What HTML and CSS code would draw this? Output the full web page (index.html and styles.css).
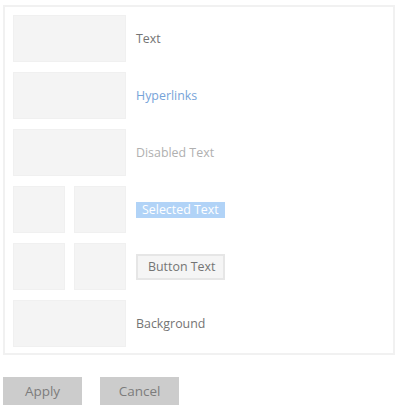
FILE: index.html
```html
<!DOCTYPE html>
<html lang="en">
<head>
    <meta charset="UTF-8">
    <title>Colors</title>
    <link rel="stylesheet" href="styles.css">
</head>
<body>
    <div class="panel">
        <div class="row">
            <div class="swatch"></div>
            <span class="label">Text</span>
        </div>
        <div class="row">
            <div class="swatch"></div>
            <span class="label link">Hyperlinks</span>
        </div>
        <div class="row">
            <div class="swatch"></div>
            <span class="label disabled">Disabled Text</span>
        </div>
        <div class="row">
            <div class="swatch split">
                <div class="half"></div>
                <div class="half"></div>
            </div>
            <span class="label selected">Selected Text</span>
        </div>
        <div class="row">
            <div class="swatch split">
                <div class="half"></div>
                <div class="half"></div>
            </div>
            <span class="label button-text">Button Text</span>
        </div>
        <div class="row">
            <div class="swatch"></div>
            <span class="label">Background</span>
        </div>
    </div>

    <div class="actions">
        <button class="btn">Apply</button>
        <button class="btn">Cancel</button>
    </div>
</body>
</html>
```

FILE: styles.css
```css
body {
    margin: 0;
    padding: 5px 0 0 3px;
    background: #fff;
    font-family: 'Open Sans', 'Noto Sans', sans-serif;
    font-size: 12.4px;
    color: #747474;
}
.panel {
    box-sizing: border-box;
    width: 392px;
    height: 350px;
    border: 2px solid #f1f1f1;
    padding: 8px 0 0 8px;
    display: flex;
    flex-direction: column;
    gap: 10px;
}
.row {
    display: flex;
    align-items: center;
    gap: 10px;
    height: 47px;
}
.swatch {
    width: 113px;
    height: 47px;
    background: #f4f4f4;
    box-shadow: inset 0 0 0 1px #f0f0f0;
}
.swatch.split {
    display: flex;
    gap: 9px;
    background: none;
    box-shadow: none;
}
.half {
    flex: 1;
    background: #f4f4f4;
    box-shadow: inset 0 0 0 1px #f0f0f0;
}
.label {
    line-height: 16px;
}
.link {
    color: #76a3d9;
}
.disabled {
    color: #b0b0b0;
}
.selected {
    background: #b1d3f7;
    color: #fff;
    padding: 0 6px;
}
.button-text {
    border: 2px solid #e6e6e6;
    background: #f5f5f5;
    padding: 3px 8px 3px 10px;
}
.actions {
    display: flex;
    gap: 18px;
    margin-top: 22px;
}
.btn {
    width: 79px;
    height: 28px;
    border: none;
    background: #cccccc;
    color: #7c7c7c;
    font-family: 'Open Sans', 'Noto Sans', sans-serif;
    font-size: 13.5px;
    padding: 0;
}
```
